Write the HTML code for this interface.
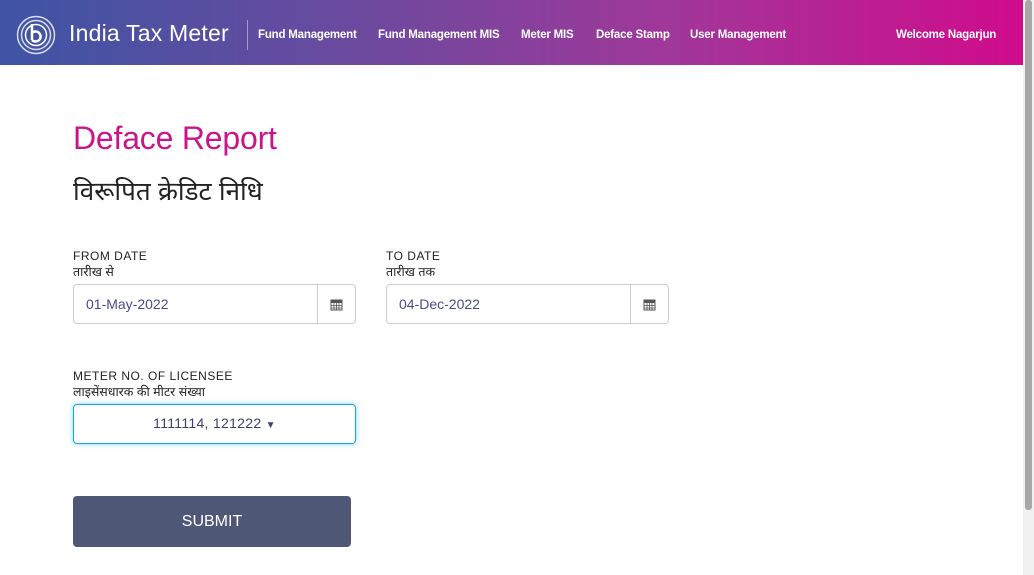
<!DOCTYPE html>
<html><head><meta charset="utf-8"><style>
*{box-sizing:border-box;margin:0;padding:0}
body{width:1034px;height:575px;overflow:hidden;background:#fff;font-family:"Liberation Sans","DejaVu Sans",sans-serif;position:relative}
.hdr{position:absolute;left:0;top:0;width:1023px;height:65px;background:linear-gradient(90deg,#3e54a4 0%,#6b4a9e 35%,#a0389a 65%,#d00b8c 100%);color:#fff}
.logo{position:absolute;left:16px;top:15px}
.brand{position:absolute;left:69px;top:20px;font-size:23px;letter-spacing:0.2px}
.sep{position:absolute;left:247px;top:20px;width:1px;height:30px;background:rgba(255,255,255,.45)}
.nav{position:absolute;top:29px;font-size:11.5px;font-weight:bold;letter-spacing:-0.2px}
.sb{position:absolute;right:0;top:0;width:11px;height:575px;background:#f1f1f1}
.sb div{position:absolute;left:2px;top:0;width:7px;height:510px;background:#a8a8a8;border-radius:3px}
h1{position:absolute;left:73px;top:120px;font-weight:normal;font-size:32px;color:#c9158a;letter-spacing:-0.2px}
h2{position:absolute;left:73px;top:176px;font-weight:normal;font-size:26px;color:#222;font-family:"Liberation Sans","Noto Sans Devanagari",sans-serif}
.lbl{position:absolute;font-size:12px;letter-spacing:0.5px;color:#222;line-height:16px}
.lbl span{display:block;letter-spacing:0;font-size:12.5px}
.inp{position:absolute;width:283px;height:40px;border:1px solid #ccc;border-radius:4px;font-size:14px;color:#4a4a8a;padding:11px 12px}
.inp .ic{position:absolute;right:0;top:0;width:38px;height:38px;border-left:1px solid #ccc;display:flex;align-items:center;justify-content:center}
.sel{position:absolute;left:73px;top:404px;width:283px;height:40px;border:1px solid #1fa3c9;border-radius:4px;box-shadow:0 0 6px #7fd8f0;text-align:center;font-size:14px;color:#3c3f70;padding-top:10px;letter-spacing:0.3px}
.btn{position:absolute;left:73px;top:496px;width:278px;height:51px;background:#4f5777;border-radius:4px;color:#fff;font-size:16px;text-align:center;line-height:51px}
</style></head><body>
<div class="hdr">
<svg class="logo" width="40" height="40" viewBox="0 0 40 40" fill="none" stroke="#fff" stroke-width="1.5">
<circle cx="20" cy="20" r="18.5" opacity=".8"/><circle cx="20" cy="20" r="14.5" opacity=".8"/><circle cx="20" cy="20" r="10.5"/>
<path d="M16 9v16M16 18a5 5 0 1 1 0 7" stroke-width="2.5"/></svg>
<div class="brand">India Tax Meter</div>
<div class="sep"></div>
<div class="nav" style="left:258px">Fund Management</div>
<div class="nav" style="left:378px">Fund Management MIS</div>
<div class="nav" style="left:521px">Meter MIS</div>
<div class="nav" style="left:596px">Deface Stamp</div>
<div class="nav" style="left:690px">User Management</div>
<div class="nav" style="left:896px">Welcome Nagarjun</div>
</div>
<div class="sb"><div></div></div>
<h1>Deface Report</h1>
<h2>विरूपित क्रेडिट निधि</h2>
<div class="lbl" style="left:73px;top:248px">FROM DATE<span>तारीख से</span></div>
<div class="inp" style="left:73px;top:284px">01-May-2022<div class="ic"><svg width="13" height="13" viewBox="0 0 13 13"><rect x="1" y="2" width="11" height="10" fill="none" stroke="#555"/><rect x="1" y="2" width="11" height="3" fill="#555"/><path d="M1 7.5h11M1 10h11M4 5v7M6.5 5v7M9 5v7" stroke="#555" stroke-width=".8"/></svg></div></div>
<div class="lbl" style="left:386px;top:248px">TO DATE<span>तारीख तक</span></div>
<div class="inp" style="left:386px;top:284px">04-Dec-2022<div class="ic"><svg width="13" height="13" viewBox="0 0 13 13"><rect x="1" y="2" width="11" height="10" fill="none" stroke="#555"/><rect x="1" y="2" width="11" height="3" fill="#555"/><path d="M1 7.5h11M1 10h11M4 5v7M6.5 5v7M9 5v7" stroke="#555" stroke-width=".8"/></svg></div></div>
<div class="lbl" style="left:73px;top:368px">METER NO. OF LICENSEE<span>लाइसेंसधारक की मीटर संख्या</span></div>
<div class="sel">1111114, 121222 <span style="font-size:10px">▼</span></div>
<div class="btn">SUBMIT</div>
</body></html>
